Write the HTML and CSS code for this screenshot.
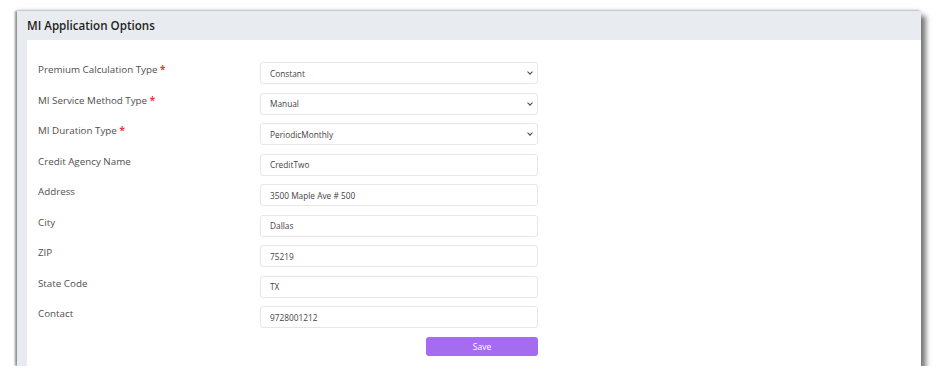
FILE: index.html
```html
<!DOCTYPE html>
<html lang="en">

<head>
    <meta charset="UTF-8">
    <meta name="viewport" content="width=device-width, initial-scale=1.0">
    <title>MI Application Options</title>
    <link rel="stylesheet" href="styles.css">
</head>

<body>
    <div class="shot">
        <div class="panel-header">
            <h2>MI Application Options</h2>
        </div>
        <div class="panel-main">
            <div class="side-strip"></div>
            <form class="panel-body">
                <div class="form-row">
                    <label for="calc-type">Premium Calculation Type <span class="req">*</span></label>
                    <div class="select-wrap">
                        <select id="calc-type">
                            <option>Constant</option>
                        </select>
                    </div>
                </div>
                <div class="form-row">
                    <label for="service-type">MI Service Method Type <span class="req">*</span></label>
                    <div class="select-wrap">
                        <select id="service-type">
                            <option>Manual</option>
                        </select>
                    </div>
                </div>
                <div class="form-row">
                    <label for="duration-type">MI Duration Type <span class="req">*</span></label>
                    <div class="select-wrap">
                        <select id="duration-type">
                            <option>PeriodicMonthly</option>
                        </select>
                    </div>
                </div>
                <div class="form-row">
                    <label for="agency">Credit Agency Name</label>
                    <input type="text" id="agency" value="CreditTwo">
                </div>
                <div class="form-row">
                    <label for="address">Address</label>
                    <input type="text" id="address" value="3500 Maple Ave # 500">
                </div>
                <div class="form-row">
                    <label for="city">City</label>
                    <input type="text" id="city" value="Dallas">
                </div>
                <div class="form-row">
                    <label for="zip">ZIP</label>
                    <input type="text" id="zip" value="75219">
                </div>
                <div class="form-row">
                    <label for="state">State Code</label>
                    <input type="text" id="state" value="TX">
                </div>
                <div class="form-row">
                    <label for="contact">Contact</label>
                    <input type="text" id="contact" value="9728001212">
                </div>
                <div class="form-actions">
                    <button type="button" class="save">Save</button>
                </div>
            </form>
        </div>
    </div>
</body>

</html>
```

FILE: styles.css
```css
body {
    font-family: 'Open Sans', sans-serif;
    background-color: #fff;
    color: #333;
    margin: 0;
}

.shot {
    width: 904px;
    height: 355px;
    margin: 11px 0 0 17px;
    display: flex;
    flex-direction: column;
    background-color: #fff;
    box-shadow: 5px 5px 5px rgba(0, 0, 0, 0.5), -2px 0 2px rgba(0, 0, 0, 0.4), 0 -1px 4px rgba(0, 0, 0, 0.15);
}

.panel-header {
    height: 29px;
    background-color: #e8ebf0;
    display: flex;
    align-items: center;
    padding-left: 10px;
}

.panel-header h2 {
    margin: 0;
    font-size: 11.6px;
    font-weight: 600;
    color: #1f1f1f;
}

.panel-main {
    flex: 1;
    display: flex;
}

.side-strip {
    width: 10px;
    background-color: #e8ebf0;
}

.panel-body {
    flex: 1;
    padding: 22px 0 0 11px;
    display: flex;
    flex-direction: column;
    gap: 8.5px;
}

.form-row {
    display: flex;
    align-items: flex-start;
}

label {
    width: 222px;
    padding-top: 1px;
    font-size: 9.8px;
    line-height: 14px;
    color: #4f4f4f;
}

.req {
    color: #e53935;
    font-weight: bold;
}

input,
select {
    display: block;
    width: 278px;
    height: 22px;
    box-sizing: border-box;
    border: 1px solid #e6e6e6;
    border-radius: 3px;
    background-color: #fff;
    padding: 0 9px;
    font-family: 'Open Sans', sans-serif;
    font-size: 8.3px;
    color: #444;
    outline: none;
}

.select-wrap {
    position: relative;
}

select {
    appearance: none;
    -webkit-appearance: none;
}

.select-wrap::after {
    content: '';
    position: absolute;
    right: 6px;
    top: 8px;
    width: 3px;
    height: 3px;
    border-right: 1.3px solid #444;
    border-bottom: 1.3px solid #444;
    transform: rotate(45deg);
}

.form-actions {
    display: flex;
    padding-left: 388px;
}

button.save {
    width: 112px;
    height: 19px;
    padding: 0;
    border: none;
    border-radius: 3px;
    background-color: #a66cf0;
    color: #fff;
    font-family: 'Open Sans', sans-serif;
    font-size: 8.5px;
    cursor: pointer;
}
```
